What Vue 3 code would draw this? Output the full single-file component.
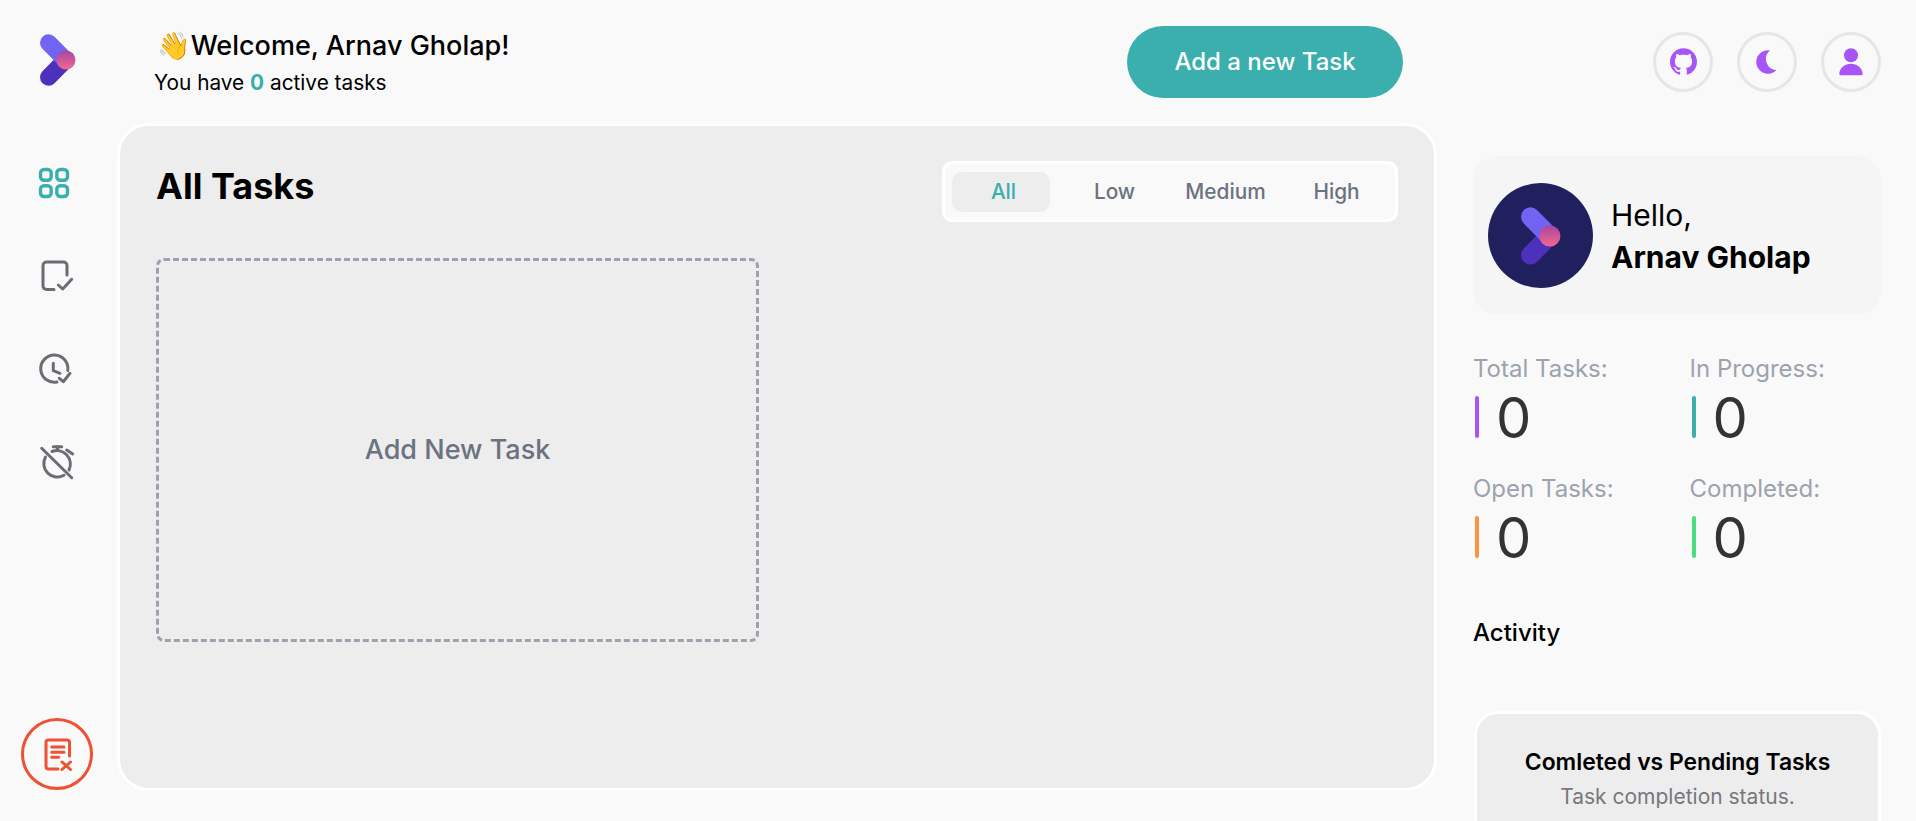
<script setup>
const filters = ['All', 'Low', 'Medium', 'High'];

const stats = [
  { label: 'Total Tasks:', value: 0, color: '#a855f7' },
  { label: 'In Progress:', value: 0, color: '#3aafae' },
  { label: 'Open Tasks:', value: 0, color: '#fb923c' },
  { label: 'Completed:', value: 0, color: '#4ade80' },
];
</script>

<template>
  <div class="app">
    <aside class="sidebar">
      <svg class="logo" viewBox="0 0 36 52" width="36" height="52">
        <defs>
          <linearGradient id="logo-dot" x1="0" y1="0" x2="0" y2="1">
            <stop offset="0" stop-color="#a4479f" />
            <stop offset="1" stop-color="#f7668f" />
          </linearGradient>
        </defs>
        <path d="M8.5 43.2 25.6 26" stroke="#4d30bc" stroke-width="17" stroke-linecap="round" />
        <path d="M8.5 8.7 25.6 26" stroke="#7263f3" stroke-width="17" stroke-linecap="round" />
        <circle cx="26" cy="26" r="9.5" fill="url(#logo-dot)" />
      </svg>

      <nav class="nav">
        <svg class="nav-icon active" viewBox="0 0 40 40">
          <rect x="3.5" y="6.5" width="10.7" height="10.7" rx="3.5" />
          <rect x="19.8" y="6.5" width="10.7" height="10.7" rx="3.5" />
          <rect x="3.5" y="22.8" width="10.7" height="10.7" rx="3.5" />
          <rect x="19.8" y="22.8" width="10.7" height="10.7" rx="3.5" />
        </svg>
        <svg class="nav-icon" viewBox="0 0 40 40">
          <path d="M30 19V9.5A3.5 3.5 0 0 0 26.5 6H9.5A3.5 3.5 0 0 0 6 9.5v20.4a3.5 3.5 0 0 0 3.5 3.5H17" />
          <path d="M21.3 29l4.4 4 9-9.7" />
        </svg>
        <svg class="nav-icon" viewBox="0 0 40 40">
          <path d="M30.8 21.5A13.6 13.6 0 1 0 20 33" />
          <path d="M16.3 14.3v7.4l6.7 2.6" />
          <path d="M22.3 29.3l4 3.4 6.7-8.4" />
        </svg>
        <svg class="nav-icon" viewBox="0 0 40 40">
          <path d="M4.7 6.3l30 29.4" />
          <path d="M16.3 4.7h8.4" />
          <path d="M20.5 4.7V8" />
          <path d="M29.7 8l6 4" />
          <path d="M15 9.5A13.5 13.5 0 0 1 32 28" />
          <path d="M8.5 15A13.5 13.5 0 0 0 27 33.3" />
        </svg>
      </nav>

      <button class="delete-all">
        <svg class="delete-icon" viewBox="0 0 40 40" width="40" height="40">
          <path d="M32.5 22V8.5A2.5 2.5 0 0 0 30 6H11.5A2.5 2.5 0 0 0 9 8.5v24a2.5 2.5 0 0 0 2.5 2.5H21" />
          <path d="M14.7 13H27M14.7 18.3H27M14.7 23.3h7" />
          <path d="M25 28l8.5 7.5M33.5 28 25 35.5" />
        </svg>
      </button>
    </aside>

    <div class="content">
      <header class="header">
        <div class="greeting">
          <h1><span class="wave">👋</span>Welcome, Arnav Gholap!</h1>
          <p>You have <span class="count">0</span> active tasks</p>
        </div>
        <button class="add-btn">Add a new Task</button>
        <div class="header-icons">
          <a class="round-icon">
            <svg viewBox="0 0 24 24" width="27" height="27">
              <path d="M12 .297c-6.63 0-12 5.373-12 12 0 5.303 3.438 9.8 8.205 11.385.6.113.82-.258.82-.577 0-.285-.01-1.04-.015-2.04-3.338.724-4.042-1.61-4.042-1.61C4.422 18.07 3.633 17.7 3.633 17.7c-1.087-.744.084-.729.084-.729 1.205.084 1.838 1.236 1.838 1.236 1.07 1.835 2.809 1.305 3.495.998.108-.776.417-1.305.76-1.605-2.665-.3-5.466-1.332-5.466-5.93 0-1.31.465-2.38 1.235-3.22-.135-.303-.54-1.523.105-3.176 0 0 1.005-.322 3.3 1.23.96-.267 1.98-.399 3-.405 1.02.006 2.04.138 3 .405 2.28-1.552 3.285-1.23 3.285-1.23.645 1.653.24 2.873.12 3.176.765.84 1.23 1.91 1.23 3.22 0 4.61-2.805 5.625-5.475 5.92.42.36.81 1.096.81 2.22 0 1.606-.015 2.896-.015 3.286 0 .315.21.69.825.57C20.565 22.092 24 17.592 24 12.297c0-6.627-5.373-12-12-12" />
            </svg>
          </a>
          <a class="round-icon">
            <svg viewBox="0 0 24 24" width="24" height="24">
              <path d="M15 .5A11.7 11.7 0 1 0 21.5 20 11 11 0 0 1 15 .5Z" />
            </svg>
          </a>
          <a class="round-icon">
            <svg viewBox="0 0 24 28" width="24" height="28">
              <circle cx="12" cy="7.3" r="7" />
              <path d="M2 27.3a1.7 1.7 0 0 1-1.7-1.9C1 19.5 6 15.7 12 15.7s11 3.8 11.7 9.7a1.7 1.7 0 0 1-1.7 1.9z" />
            </svg>
          </a>
        </div>
      </header>

      <div class="body">
        <main class="panel">
          <div class="panel-top">
            <h2>All Tasks</h2>
            <ul class="filters">
              <li v-for="(f, i) in filters" :key="f" :class="{ selected: i === 0 }">{{ f }}</li>
            </ul>
          </div>
          <div class="tasks">
            <button class="add-card">Add New Task</button>
          </div>
        </main>

        <aside class="profile">
          <div class="profile-card">
            <div class="avatar">
              <svg viewBox="0 0 36 52" width="40" height="58">
                <path d="M8.5 43.2 25.6 26" stroke="#4d30bc" stroke-width="17" stroke-linecap="round" />
                <path d="M8.5 8.7 25.6 26" stroke="#7263f3" stroke-width="17" stroke-linecap="round" />
                <circle cx="26" cy="26" r="9.5" fill="url(#logo-dot)" />
              </svg>
            </div>
            <div class="hello">
              <div>Hello,</div>
              <strong>Arnav Gholap</strong>
            </div>
          </div>

          <div class="stats">
            <div v-for="s in stats" :key="s.label" class="stat">
              <div class="stat-label">{{ s.label }}</div>
              <div class="stat-row">
                <span class="stat-bar" :style="{ background: s.color }"></span>
                <span class="stat-value">{{ s.value }}</span>
              </div>
            </div>
          </div>

          <h3 class="activity">Activity</h3>

          <div class="chart-card">
            <h4>Comleted vs Pending Tasks</h4>
            <p>Task completion status.</p>
          </div>
        </aside>
      </div>
    </div>
  </div>
</template>

<style>
html,
body {
  margin: 0;
  height: 100%;
  overflow: hidden;
  background: #f9f9f9;
}
</style>

<style scoped>
.app {
  display: flex;
  height: 821px;
  overflow: hidden;
  background: #f9f9f9;
  color: #000;
  font-family: Inter, 'Noto Sans', sans-serif;
}

.sidebar {
  width: 117px;
  flex: none;
  box-sizing: border-box;
  display: flex;
  flex-direction: column;
  align-items: center;
  padding: 34px 3px 31px 0;
}

.logo {
  display: block;
  flex: none;
  margin-left: 2px;
}

.nav {
  display: flex;
  flex-direction: column;
  gap: 53px;
  margin-top: 77px;
}

.nav-icon {
  display: block;
  width: 40px;
  height: 40px;
  fill: none;
  stroke: #6c6c75;
  stroke-width: 3;
  stroke-linecap: round;
  stroke-linejoin: round;
}

.nav-icon.active {
  stroke: #3aafae;
  stroke-width: 3.4;
}

.delete-all {
  margin-top: auto;
  width: 72px;
  height: 72px;
  padding: 0;
  box-sizing: border-box;
  display: flex;
  align-items: center;
  justify-content: center;
  background: none;
  border: 3px solid #ee5233;
  border-radius: 50%;
}

.delete-icon {
  fill: none;
  stroke: #ee5233;
  stroke-width: 3;
  stroke-linecap: round;
  stroke-linejoin: round;
}

.content {
  flex: 1;
  min-width: 0;
  display: flex;
  flex-direction: column;
}

.header {
  height: 123px;
  flex: none;
  box-sizing: border-box;
  display: flex;
  align-items: center;
  padding: 0 35px 0 37px;
}

.greeting {
  flex: 1;
}

.greeting h1 {
  margin: 0;
  font-size: 27px;
  line-height: 36px;
  font-weight: 500;
  padding-left: 3px;
}

.wave {
  font-family: 'Noto Color Emoji', Inter, sans-serif;
}

.greeting p {
  margin: 6px 0 0;
  font-size: 20.8px;
  line-height: 26px;
}

.count {
  color: #3aafae;
  font-weight: 700;
}

.add-btn {
  width: 276px;
  height: 72px;
  padding: 0;
  border: none;
  border-radius: 50px;
  background: #3aafae;
  color: #fff;
  font-family: inherit;
  font-size: 24px;
  font-weight: 500;
}

.header-icons {
  margin-left: 250px;
  display: flex;
  gap: 24px;
}

.round-icon {
  width: 60px;
  height: 60px;
  box-sizing: border-box;
  display: flex;
  align-items: center;
  justify-content: center;
  border: 3px solid #e6e6e6;
  border-radius: 50%;
}

.round-icon svg {
  display: block;
  fill: #a855f7;
}

.body {
  flex: 1;
  min-height: 0;
  display: flex;
}

.panel {
  width: 1320px;
  height: 668px;
  flex: none;
  box-sizing: border-box;
  padding: 35px 36px;
  background: #ededed;
  border: 3px solid #fff;
  border-radius: 32px;
}

.panel-top {
  display: flex;
  justify-content: space-between;
  align-items: flex-start;
}

.panel-top h2 {
  margin: 5px 0 0;
  font-size: 36px;
  line-height: 40px;
  font-weight: 700;
}

.filters {
  margin: 0;
  list-style: none;
  box-sizing: border-box;
  width: 456px;
  height: 61px;
  padding: 0 12px 0 7px;
  display: flex;
  align-items: center;
  gap: 13px;
  background: #f9f9f9;
  border: 3px solid #fff;
  border-radius: 10px;
}

.filters li {
  width: 98px;
  height: 40px;
  box-sizing: border-box;
  padding-left: 5px;
  display: flex;
  align-items: center;
  justify-content: center;
  border-radius: 10px;
  font-size: 20.8px;
  font-weight: 500;
  color: #6b7280;
}

.filters li.selected {
  background: #ededed;
  color: #3aafae;
}

.tasks {
  margin-top: 36px;
  display: grid;
  grid-template-columns: repeat(2, 1fr);
  gap: 36px;
}

.add-card {
  height: 384px;
  padding: 0 0 2px;
  background: none;
  border: 3px dashed #9ca3af;
  border-radius: 8px;
  color: #6b7280;
  font-family: inherit;
  font-size: 27px;
  font-weight: 500;
}

.profile {
  flex: 1;
  min-width: 0;
  box-sizing: border-box;
  padding: 33px 35px 0 36px;
}

.profile-card {
  height: 159px;
  box-sizing: border-box;
  padding-left: 15px;
  display: flex;
  align-items: center;
  gap: 18px;
  background: #f5f5f5;
  border-radius: 24px;
}

.avatar {
  width: 105px;
  height: 105px;
  flex: none;
  display: flex;
  align-items: center;
  justify-content: center;
  border-radius: 50%;
  background: #21205f;
}

.hello {
  font-size: 30px;
  line-height: 42px;
}

.hello strong {
  font-weight: 700;
}

.stats {
  margin-top: 38px;
  display: grid;
  grid-template-columns: repeat(2, 1fr);
  column-gap: 25px;
  row-gap: 30px;
}

.stat-label {
  font-size: 24px;
  line-height: 32px;
  color: #9ca3af;
}

.stat-row {
  margin-top: 8px;
  height: 50px;
  display: flex;
  align-items: center;
  gap: 17px;
}

.stat-bar {
  width: 4px;
  height: 42px;
  margin: 0 0 2px 2px;
  border-radius: 2px;
}

.stat-value {
  font-size: 56px;
  line-height: 50px;
  color: #333;
}

.activity {
  margin: 54px 0 0;
  font-size: 24px;
  line-height: 32px;
  font-weight: 500;
}

.chart-card {
  margin: 62px 0 0 1px;
  height: 300px;
  box-sizing: border-box;
  padding-top: 32px;
  text-align: center;
  background: #ededed;
  border: 3px solid #fff;
  border-radius: 24px;
}

.chart-card h4 {
  margin: 0;
  font-size: 22.9px;
  line-height: 32px;
  font-weight: 600;
}

.chart-card p {
  margin: 5px 0 0;
  font-size: 21px;
  line-height: 28px;
  color: #777780;
}
</style>
